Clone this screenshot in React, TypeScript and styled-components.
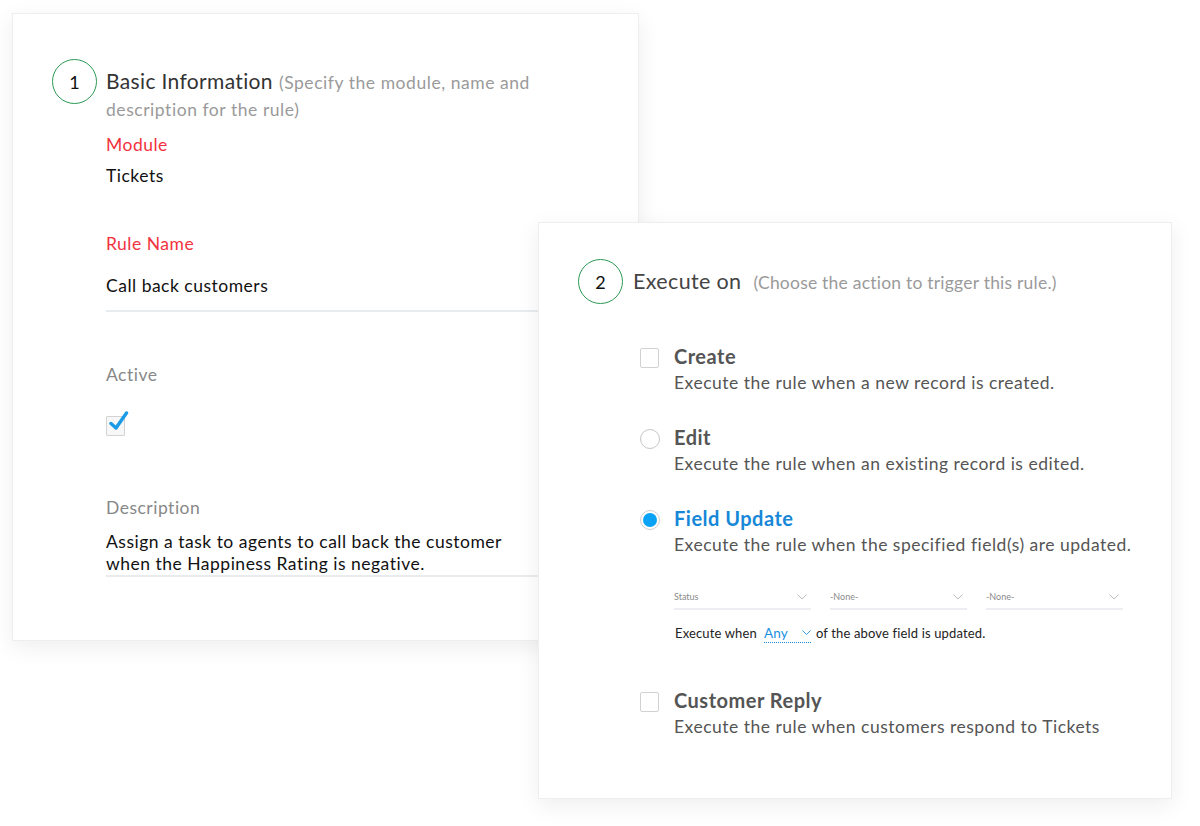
import React from "react";
import styled, { createGlobalStyle } from "styled-components";

const Global = createGlobalStyle`
  html, body { margin: 0; padding: 0; background: #ffffff; }
  body { font-family: "Lato", "Open Sans", Arial, sans-serif; -webkit-font-smoothing: antialiased; }
  * { box-sizing: border-box; }
`;

const Stage = styled.div`
  width: 1200px;
  height: 826px;
  display: grid;
  grid-template-columns: 12px 526px 100px 534px 1fr;
  grid-template-rows: 13px 209px 419px 157px 1fr;
  background: #fff;
  overflow: hidden;
`;

const Card = styled.section<{ $col: string; $row: string; $z: number }>`
  grid-column: ${(p) => p.$col};
  grid-row: ${(p) => p.$row};
  z-index: ${(p) => p.$z};
  background: #fff;
  border: 1px solid #eeeeee;
  box-shadow: 0 6px 22px rgba(0, 0, 0, 0.07);
  overflow: hidden;
`;

const BasicCard = styled(Card)`
  padding: 45px 30px 0 39px;
  margin-right: -1px;
`;

const ExecCard = styled(Card)`
  padding: 36px 30px 0 39px;
  margin-bottom: -1px;
`;

const Header = styled.div<{ $center?: boolean }>`
  display: flex;
  align-items: ${(p) => (p.$center ? "center" : "flex-start")};
  gap: ${(p) => (p.$center ? "10px" : "9px")};
`;

const StepCircle = styled.div`
  width: 45px;
  height: 45px;
  flex-shrink: 0;
  border: 1.5px solid #2c9a55;
  border-radius: 50%;
  display: flex;
  align-items: center;
  justify-content: center;
  font-size: 18px;
  color: #111;
`;

const HeaderText = styled.div<{ $mt: number }>`
  margin-top: ${(p) => p.$mt}px;
  display: flex;
  flex-direction: column;
`;

const HeaderTitle = styled.div<{ $size: number; $color: string }>`
  font-size: ${(p) => p.$size}px;
  letter-spacing: 0.35px;
  line-height: 27px;
  color: ${(p) => p.$color};
  white-space: nowrap;
`;

const HeaderHint = styled.span<{ $gap: number; $ls: number }>`
  font-size: 17.5px;
  letter-spacing: ${(p) => p.$ls}px;
  line-height: 27px;
  color: #9a9a9a;
  margin-left: ${(p) => p.$gap}px;
`;

const Body = styled.div`
  margin-left: 54px;
  display: flex;
  flex-direction: column;
  font-size: 17.5px;
  letter-spacing: 0.5px;
`;

const Label = styled.div<{ $mt: number; $required?: boolean }>`
  margin-top: ${(p) => p.$mt}px;
  line-height: 22px;
  color: ${(p) => (p.$required ? "#f2323e" : "#888888")};
`;

const Value = styled.div<{ $mt: number; $underline?: boolean; $pb?: number }>`
  margin-top: ${(p) => p.$mt}px;
  line-height: 22px;
  color: #111;
  padding-bottom: ${(p) => p.$pb ?? 0}px;
  border-bottom: ${(p) => (p.$underline ? "2px solid #e9ecef" : "none")};
`;

const CheckBoxBox = styled.div<{ $mt?: number }>`
  position: relative;
  margin-top: ${(p) => p.$mt ?? 0}px;
  width: 19px;
  height: 20px;
  border: 1.5px solid #d3d3d3;
  background: #f7f7f7;
  border-radius: 1px;
  flex-shrink: 0;
`;

const CheckMark = styled.svg`
  position: absolute;
  left: 2px;
  top: -7px;
`;

const OptionList = styled.div`
  margin-left: 62px;
  margin-top: 39px;
  display: flex;
  flex-direction: column;
`;

const Option = styled.div<{ $mt: number }>`
  display: flex;
  gap: 14px;
  margin-top: ${(p) => p.$mt}px;
`;

const Control = styled.div`
  width: 20px;
  padding-top: 5px;
  display: flex;
  justify-content: flex-start;
  flex-shrink: 0;
`;

const EmptyBox = styled.div`
  width: 19px;
  height: 20px;
  border: 1.5px solid #d2d2d2;
  border-radius: 2px;
  background: #fff;
`;

const Radio = styled.div<{ $on?: boolean }>`
  width: 20px;
  height: 20px;
  border-radius: 50%;
  border: 1.5px solid ${(p) => (p.$on ? "#cfcfcf" : "#c6c6c6")};
  background: #fff;
  display: flex;
  align-items: center;
  justify-content: center;
  &::after {
    content: "";
    display: ${(p) => (p.$on ? "block" : "none")};
    width: 14px;
    height: 14px;
    border-radius: 50%;
    background: #0aa2f5;
  }
`;

const OptionText = styled.div`
  display: flex;
  flex-direction: column;
`;

const OptionTitle = styled.div<{ $active?: boolean }>`
  font-size: 20px;
  font-weight: 700;
  letter-spacing: 0.5px;
  line-height: 26px;
  color: ${(p) => (p.$active ? "#1787d8" : "#555555")};
`;

const OptionDesc = styled.div`
  font-size: 17.5px;
  letter-spacing: 0.5px;
  line-height: 28px;
  color: #555555;
`;

const DropRow = styled.div`
  display: flex;
  gap: 19px;
  margin-top: 26px;
`;

const Dropdown = styled.div`
  width: 137px;
  height: 25px;
  display: flex;
  align-items: center;
  justify-content: space-between;
  border-bottom: 2px solid #eceef3;
  font-size: 9px;
  color: #8a8a8a;
  padding: 0 4px 0 0;
`;

const Chevron = styled.svg`
  display: block;
`;

const WhenLine = styled.div`
  display: flex;
  align-items: center;
  margin-top: 13px;
  margin-left: 1px;
  font-size: 13px;
  letter-spacing: 0.15px;
  line-height: 20px;
  color: #222;
`;

const AnySelect = styled.span`
  display: inline-flex;
  align-items: center;
  justify-content: space-between;
  width: 47px;
  margin: 0 5px 0 7px;
  color: #1a8fe0;
  font-size: 13.5px;
  border-bottom: 1.5px dotted #1a8fe0;
  line-height: 18px;
`;

const Check = () => (
  <CheckMark width="20" height="21" viewBox="0 0 20 21">
    <path
      d="M2 13.5 L7 18 L17.5 3"
      fill="none"
      stroke="#1a9be6"
      strokeWidth="3.4"
      strokeLinecap="round"
      strokeLinejoin="round"
    />
  </CheckMark>
);

const Down = ({ color = "#bdbdbd", w = 10 }: { color?: string; w?: number }) => (
  <Chevron width={w} height={w * 0.6} viewBox="0 0 10 6">
    <path d="M0.5 0.5 L5 5 L9.5 0.5" fill="none" stroke={color} strokeWidth="1" />
  </Chevron>
);

export default function App() {
  return (
    <>
      <Global />
      <Stage>
        <BasicCard $col="2 / 4" $row="2 / 4" $z={1}>
          <Header>
            <StepCircle>1</StepCircle>
            <HeaderText $mt={8}>
              <HeaderTitle $size={21} $color="#333333">
                Basic Information
                <HeaderHint $gap={6} $ls={0.55}>(Specify the module, name and</HeaderHint>
              </HeaderTitle>
              <HeaderHint $gap={0} $ls={0.55}>description for the rule)</HeaderHint>
            </HeaderText>
          </Header>
          <Body>
            <Label $mt={11} $required>Module</Label>
            <Value $mt={9}>Tickets</Value>
            <Label $mt={46} $required>Rule Name</Label>
            <Value $mt={20} $underline $pb={13}>Call back customers</Value>
            <Label $mt={52}>Active</Label>
            <CheckBoxBox $mt={30}>
              <Check />
            </CheckBoxBox>
            <Label $mt={61}>Description</Label>
            <Value $mt={12} $underline $pb={0}>
              Assign a task to agents to call back the customer
              <br />
              when the Happiness Rating is negative.
            </Value>
          </Body>
        </BasicCard>

        <ExecCard $col="3 / 5" $row="3 / 5" $z={2}>
          <Header $center>
            <StepCircle>2</StepCircle>
            <HeaderText $mt={0}>
              <HeaderTitle $size={21.5} $color="#444444">
                Execute on
                <HeaderHint $gap={12} $ls={0.22}>(Choose the action to trigger this rule.)</HeaderHint>
              </HeaderTitle>
            </HeaderText>
          </Header>
          <OptionList>
            <Option $mt={0}>
              <Control>
                <EmptyBox />
              </Control>
              <OptionText>
                <OptionTitle>Create</OptionTitle>
                <OptionDesc>Execute the rule when a new record is created.</OptionDesc>
              </OptionText>
            </Option>
            <Option $mt={27}>
              <Control>
                <Radio />
              </Control>
              <OptionText>
                <OptionTitle>Edit</OptionTitle>
                <OptionDesc>Execute the rule when an existing record is edited.</OptionDesc>
              </OptionText>
            </Option>
            <Option $mt={27}>
              <Control>
                <Radio $on />
              </Control>
              <OptionText>
                <OptionTitle $active>Field Update</OptionTitle>
                <OptionDesc>Execute the rule when the specified field(s) are updated.</OptionDesc>
                <DropRow>
                  <Dropdown>
                    <span>Status</span>
                    <Down />
                  </Dropdown>
                  <Dropdown>
                    <span>-None-</span>
                    <Down />
                  </Dropdown>
                  <Dropdown>
                    <span>-None-</span>
                    <Down />
                  </Dropdown>
                </DropRow>
                <WhenLine>
                  Execute when
                  <AnySelect>
                    Any
                    <Down color="#1a8fe0" w={9} />
                  </AnySelect>
                  of the above field is updated.
                </WhenLine>
              </OptionText>
            </Option>
            <Option $mt={44}>
              <Control>
                <EmptyBox />
              </Control>
              <OptionText>
                <OptionTitle>Customer Reply</OptionTitle>
                <OptionDesc>Execute the rule when customers respond to Tickets</OptionDesc>
              </OptionText>
            </Option>
          </OptionList>
        </ExecCard>
      </Stage>
    </>
  );
}
